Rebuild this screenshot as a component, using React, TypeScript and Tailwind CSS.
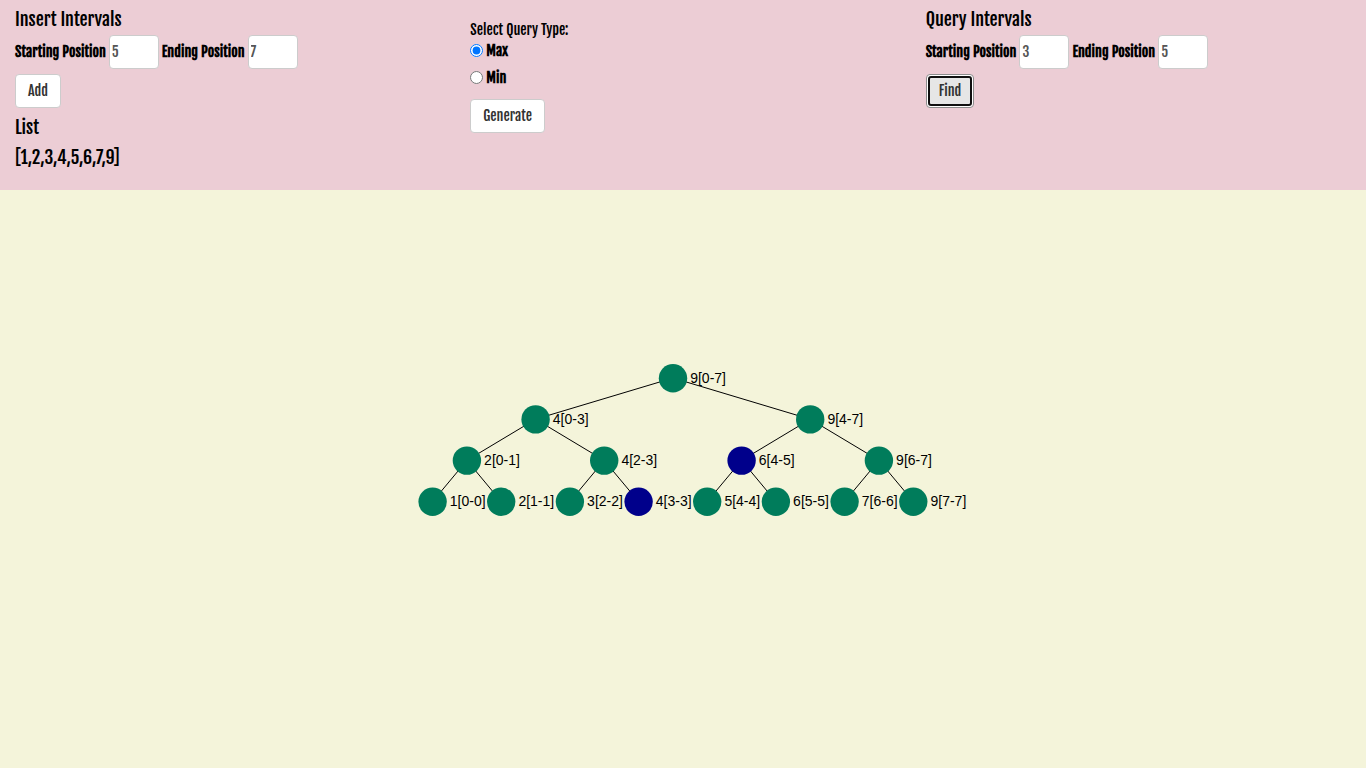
import { useState } from "react";

type TreeNode = { x: number; y: number; label: string; found?: boolean; parent?: number };

const nodes: TreeNode[] = [
  { x: 274, y: 14, label: "9[0-7]" },
  { x: 136.6, y: 55.2, label: "4[0-3]", parent: 0 },
  { x: 411.2, y: 55.2, label: "9[4-7]", parent: 0 },
  { x: 67.9, y: 96.4, label: "2[0-1]", parent: 1 },
  { x: 205.2, y: 96.4, label: "4[2-3]", parent: 1 },
  { x: 342.6, y: 96.4, label: "6[4-5]", parent: 2, found: true },
  { x: 479.9, y: 96.4, label: "9[6-7]", parent: 2 },
  { x: 33.6, y: 137.6, label: "1[0-0]", parent: 3 },
  { x: 102.2, y: 137.6, label: "2[1-1]", parent: 3 },
  { x: 170.9, y: 137.6, label: "3[2-2]", parent: 4 },
  { x: 239.6, y: 137.6, label: "4[3-3]", parent: 4, found: true },
  { x: 308.2, y: 137.6, label: "5[4-4]", parent: 5 },
  { x: 376.9, y: 137.6, label: "6[5-5]", parent: 5 },
  { x: 445.6, y: 137.6, label: "7[6-6]", parent: 6 },
  { x: 514.3, y: 137.6, label: "9[7-7]", parent: 6 },
];

const buttonBase = "h-[34px] rounded border px-3 text-sm leading-5 text-[#333]";
const plainButton = "border-[#ccc] bg-white";

function PositionFields({ id, start, end }: { id: string; start: string; end: string }) {
  const inputClass =
    "h-[34px] w-[50px] shrink-0 rounded border border-[#ccc] bg-white px-0.5 pb-0.5 text-sm text-[#555]";
  const labelClass = "shrink-0 whitespace-nowrap text-sm leading-5 font-bold";
  return (
    <div className="flex items-center gap-[3px]">
      <label htmlFor={`${id}-start`} className={labelClass}>
        Starting Position
      </label>
      <input id={`${id}-start`} defaultValue={start} inputMode="numeric" className={inputClass} />
      <label htmlFor={`${id}-end`} className={labelClass}>
        Ending Position
      </label>
      <input id={`${id}-end`} defaultValue={end} inputMode="numeric" className={inputClass} />
    </div>
  );
}

function SegmentTree() {
  return (
    <svg width="568" height="152" viewBox="0 0 568 152" role="img" aria-label="Segment tree" className="max-w-full">
      {nodes.map((n) =>
        n.parent === undefined ? null : (
          <line key={n.label} x1={nodes[n.parent].x} y1={nodes[n.parent].y} x2={n.x} y2={n.y} stroke="#000" />
        ),
      )}
      {nodes.map((n) => (
        <g key={n.label}>
          <circle cx={n.x} cy={n.y + 0.2} r="14.2" fill={n.found ? "#00008b" : "#007c5b"} />
          <text x={n.x + 17.2} y={n.y + 4.6} className="font-['Liberation_Sans',sans-serif] text-sm">
            {n.label}
          </text>
        </g>
      ))}
    </svg>
  );
}

export default function App() {
  const [queryType, setQueryType] = useState("Max");
  return (
    <div className="min-h-screen bg-[#f4f4da] text-black">
      <header className="grid grid-cols-3 bg-[#eccdd5] pb-[23px] font-['Fjalla_One','Liberation_Sans_Narrow',sans-serif]">
        <section className="flex flex-col items-start px-[15px] pt-[9px]">
          <h4 className="mb-1.5 text-lg leading-5">Insert Intervals</h4>
          <PositionFields id="insert" start="5" end="7" />
          <button type="button" className={`${buttonBase} ${plainButton} mt-[5px]`}>
            Add
          </button>
          <h4 className="mt-[9px] text-lg leading-5">List</h4>
          <h4 className="mt-2.5 text-lg leading-5">[1,2,3,4,5,6,7,9]</h4>
        </section>

        <section className="flex flex-col items-start px-[15px] pt-5">
          <p className="text-sm leading-5">Select Query Type:</p>
          <div className="flex flex-col gap-[5px]">
            {["Max", "Min"].map((type) => (
              <label key={type} className="flex items-start gap-[3px] text-sm leading-[22px] font-bold">
                <input
                  type="radio"
                  name="query-type"
                  checked={queryType === type}
                  onChange={() => setQueryType(type)}
                  className="mt-1 size-[13px]"
                />
                {type}
              </label>
            ))}
          </div>
          <button type="button" className={`${buttonBase} ${plainButton} mt-2.5`}>
            Generate
          </button>
        </section>

        <section className="flex flex-col items-start px-[15px] pt-[9px]">
          <h4 className="mb-1.5 text-lg leading-5">Query Intervals</h4>
          <PositionFields id="query" start="3" end="5" />
          <button
            type="button"
            className={`${buttonBase} relative mt-[5px] border-[#8c8c8c] bg-white before:absolute before:inset-px before:rounded-[3px] before:border-2 before:border-[#101010] before:bg-[#e6e6e6]`}
          >
            <span className="relative">Find</span>
          </button>
        </section>
      </header>

      <main className="flex justify-center pt-[174px]">
        <SegmentTree />
      </main>
    </div>
  );
}
